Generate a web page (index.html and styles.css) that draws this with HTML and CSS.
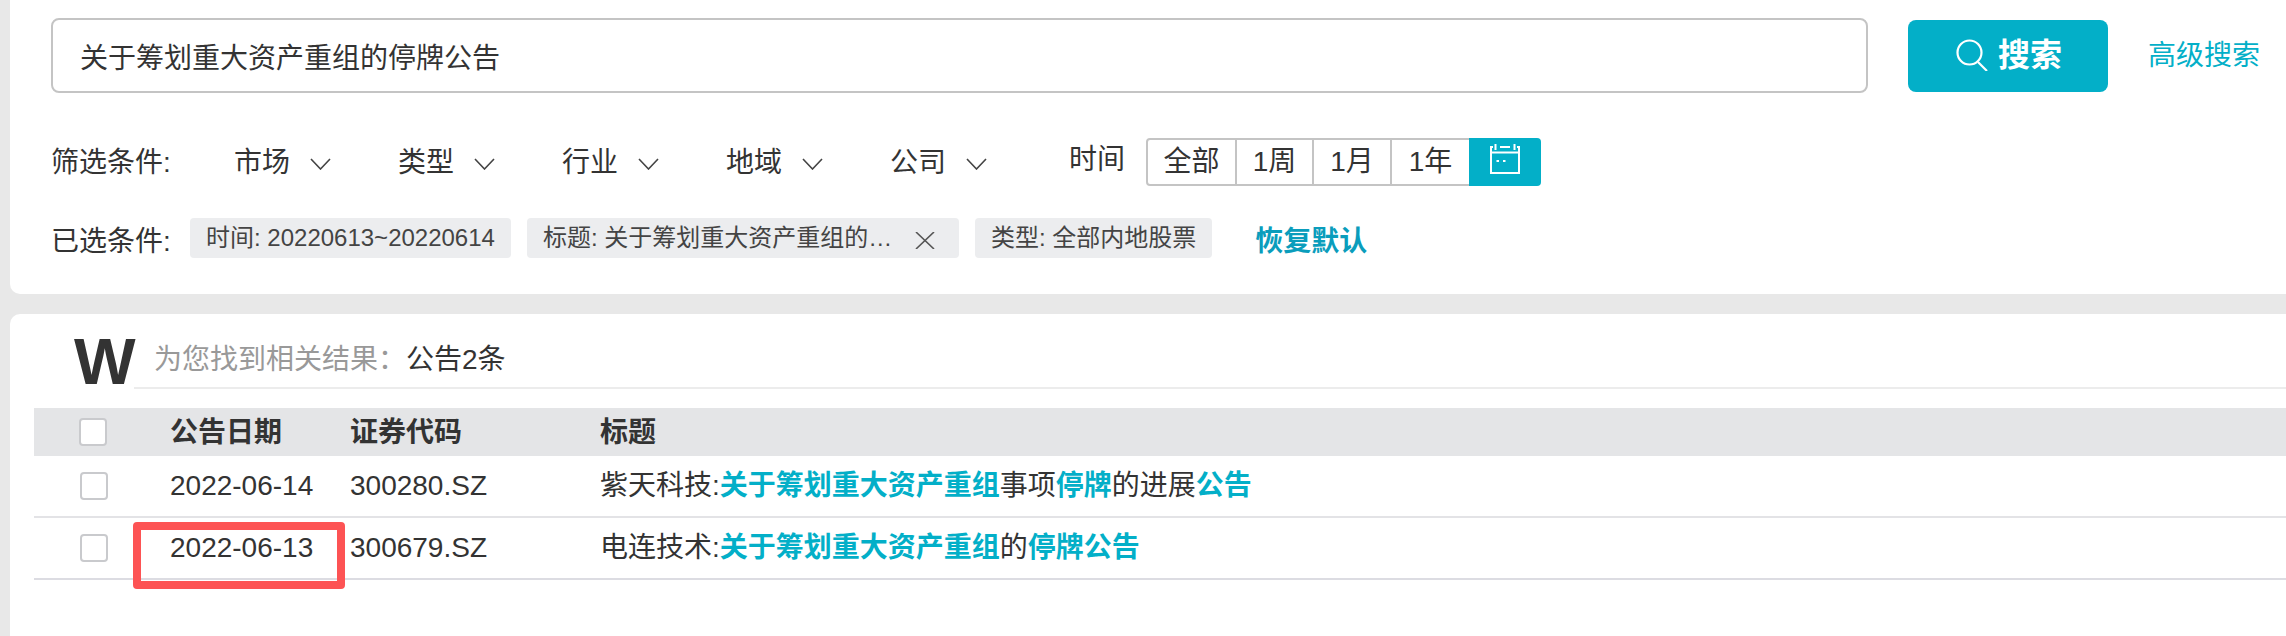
FILE: index.html
```html
<!DOCTYPE html>
<html lang="zh-CN">
<head>
<meta charset="utf-8">
<title>公告搜索</title>
<link rel="stylesheet" href="styles.css">
</head>
<body>
<section class="panel filters">
  <div class="search-row">
    <input class="search-input" type="text" value="关于筹划重大资产重组的停牌公告">
    <button class="search-btn" type="button">
      <svg class="search-icon" viewBox="0 0 32 32"><circle cx="13.5" cy="13.5" r="12"/><path d="M22 23l9 9"/></svg>
      <span>搜索</span>
    </button>
    <a class="adv-link">高级搜索</a>
  </div>
  <div class="filter-row">
    <span class="row-label filter-label">筛选条件:</span>
    <span class="dropdown">市场<svg class="chev" viewBox="0 0 21 12"><path d="M1 1l9.5 10L20 1"/></svg></span>
    <span class="dropdown">类型<svg class="chev" viewBox="0 0 21 12"><path d="M1 1l9.5 10L20 1"/></svg></span>
    <span class="dropdown">行业<svg class="chev" viewBox="0 0 21 12"><path d="M1 1l9.5 10L20 1"/></svg></span>
    <span class="dropdown">地域<svg class="chev" viewBox="0 0 21 12"><path d="M1 1l9.5 10L20 1"/></svg></span>
    <span class="dropdown">公司<svg class="chev" viewBox="0 0 21 12"><path d="M1 1l9.5 10L20 1"/></svg></span>
    <span class="time-label">时间</span>
    <div class="segments">
      <span class="seg seg-all">全部</span>
      <span class="seg seg-week">1周</span>
      <span class="seg seg-month">1月</span>
      <span class="seg seg-year">1年</span>
      <span class="seg-cal">
        <svg class="cal-icon" viewBox="0 0 30 30"><path d="M3 3H1v26h28V3h-2M10 3h10M1 8.5h28"/><path d="M5.5 0v6M24.5 0v6"/><path d="M6.5 17h2.5M13 17h2.5"/></svg>
      </span>
    </div>
  </div>
  <div class="chip-row">
    <span class="row-label chip-label">已选条件:</span>
    <span class="chip">时间: 20220613~20220614</span>
    <span class="chip chip-title">标题: 关于筹划重大资产重组的…<svg class="chip-x" viewBox="0 0 20 17"><path d="M1 0l18 17M19 0L1 17"/></svg></span>
    <span class="chip">类型: 全部内地股票</span>
    <a class="reset-link">恢复默认</a>
  </div>
</section>

<section class="panel results">
  <div class="summary">
    <span class="logo">W</span>
    <div class="summary-text"><span class="muted">为您找到相关结果：</span>公告2条</div>
  </div>
  <div class="table">
    <div class="tr thead">
      <span class="cb"></span><span>公告日期</span><span>证券代码</span><span>标题</span>
    </div>
    <div class="tr row">
      <span class="cb"></span><span>2022-06-14</span><span>300280.SZ</span>
      <span>紫天科技:<b class="hl">关于筹划重大资产重组</b>事项<b class="hl">停牌</b>的进展<b class="hl">公告</b></span>
    </div>
    <div class="tr row row-last">
      <span class="cb"></span><span>2022-06-13</span><span>300679.SZ</span>
      <span>电连技术:<b class="hl">关于筹划重大资产重组</b>的<b class="hl">停牌公告</b></span>
    </div>
  </div>
</section>
<div class="annotation"></div>
</body>
</html>
```
FILE: styles.css
```css
* { box-sizing: border-box; }
html, body { margin: 0; padding: 0; }
body {
  position: relative;
  height: 636px;
  overflow: hidden;
  background: #e8e8e8;
  color: #333;
  font-family: "Liberation Sans", "Noto Sans CJK SC", sans-serif;
  font-size: 28px;
  line-height: 40px;
}
.panel { margin-left: 10px; background: #fff; }
.filters { height: 294px; padding: 18px 0 0 41px; border-bottom-left-radius: 10px; }
.results { height: 322px; margin-top: 20px; padding: 24px 0 0 24px; border-top-left-radius: 10px; }

.search-row { display: flex; align-items: center; height: 75px; }
.search-input {
  width: 1817px; height: 75px; padding: 0 0 0 27px;
  border: 2px solid #c4c4c4; border-radius: 8px; outline: none;
  font: inherit; color: #333; background: #fff;
}
.search-btn {
  display: flex; align-items: center; justify-content: center; gap: 10px;
  width: 200px; height: 72px; margin-left: 40px; padding: 0 0 2px 2px;
  border: 0; border-radius: 8px; background: #03afc8; color: #fff;
  font: inherit; font-size: 32px; font-weight: 700;
}
.search-icon { width: 32px; height: 32px; fill: none; stroke: #fff; stroke-width: 2.2; }
.adv-link { margin-left: 40px; color: #03afc8; }

.filter-row { display: flex; align-items: center; height: 48px; margin-top: 45px; }
.row-label { display: block; }
.filter-label { width: 183px; padding-top: 2px; }
.dropdown { display: flex; align-items: center; width: 164px; padding-top: 2px; }
.chev { width: 21px; height: 12px; margin: 2px 0 0 20px; fill: none; stroke: #444; stroke-width: 1.6; }
.time-label { margin-left: 15px; width: 77px; margin-top: -4px; }
.segments { display: flex; width: 395px; height: 48px; }
.seg {
  display: flex; align-items: center; justify-content: center;
  border: 2px solid #c4c4c4; border-left: 0; background: #fff;
}
.seg-all { width: 91px; border-left: 2px solid #c4c4c4; border-radius: 4px 0 0 4px; }
.seg-week { width: 77px; }
.seg-month { width: 78px; }
.seg-year { width: 77px; border-right: 0; }
.seg-cal {
  display: flex; align-items: flex-start; justify-content: center;
  width: 72px; padding: 6px 0 0; background: #03afc8; border-radius: 0 4px 4px 0;
}
.cal-icon { width: 30px; height: 30px; fill: none; stroke: #fff; stroke-width: 2; }

.chip-row { display: flex; align-items: center; height: 40px; margin-top: 32px; }
.chip-label { width: 139px; padding-top: 8px; }
.chip {
  display: flex; align-items: center; height: 40px; margin-right: 16px; padding: 0 16px;
  background: #ecedef; border-radius: 4px; color: #444; font-size: 24px; white-space: nowrap;
}
.chip-title { width: 432px; padding-right: 0; }
.chip-x { width: 20px; height: 17px; margin: 4px 0 0 23px; fill: none; stroke: #555; stroke-width: 1.6; }
.reset-link { margin-left: 27px; padding-top: 8px; color: #0a9dbc; font-weight: 700; }

.summary { display: flex; margin-left: 40px; height: 51px; }
.logo {
  display: block; flex: none; width: 60px; height: 46px;
  font-size: 64px; line-height: 48px; font-weight: 700; color: #333;
  filter: blur(.7px); transform: scaleX(1.02); transform-origin: left center;
}
.summary-text {
  flex: 1; height: 51px; padding: 2px 0 0 20px;
  border-bottom: 2px solid #ececec;
}
.muted { color: #999; }

.table { margin-top: 19px; }
.tr {
  display: grid; grid-template-columns: 136px 180px 250px 1fr;
  align-items: center;
}
.thead { height: 48px; background: #e4e5e7; font-weight: 700; padding-top: 2px; }
.row { height: 62px; border-bottom: 2px solid #e3e3e6; }
.row-last { border-bottom-color: #dcdce2; }
.cb {
  display: block; width: 28px; height: 28px; margin-left: 45px;
  background: #fff; border: 2px solid #c9cacd; border-radius: 4px;
}
.thead .cb { margin-top: -2px; }
.row .cb { margin-left: 46px; }
.hl { color: #03afc8; font-weight: 700; }

.annotation {
  position: absolute; left: 133px; top: 522px;
  width: 212px; height: 67px;
  border: 8px solid #fd5354; border-radius: 4px;
}
```
